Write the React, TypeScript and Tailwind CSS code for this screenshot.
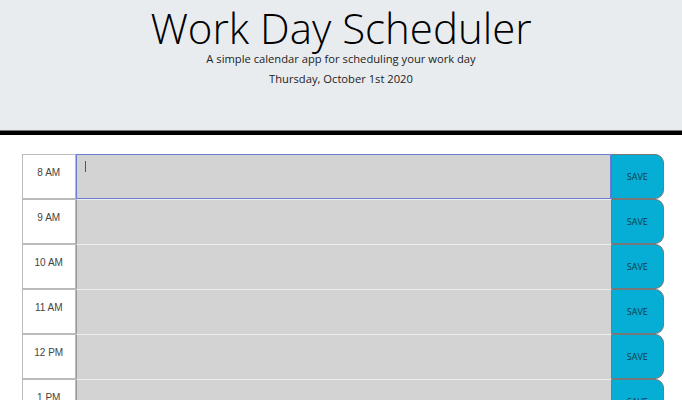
const HOURS = ['8 AM', '9 AM', '10 AM', '11 AM', '12 PM', '1 PM', '2 PM', '3 PM', '4 PM', '5 PM']

export default function App() {
  return (
    <div className="min-h-screen bg-white font-['Open_Sans',sans-serif]">
      <header className="h-[130px] bg-[#e9ecef] text-center text-black">
        <h1 className="pt-[4px] text-[42px] font-light leading-[47px]">Work Day Scheduler</h1>
        <p className="text-[11.2px] leading-[16px] text-[#222]">A simple calendar app for scheduling your work day</p>
        <p className="mt-[4px] text-[11.2px] leading-[16px] text-[#222]">Thursday, October 1st 2020</p>
      </header>
      <div className="h-[5px] border-t border-[#777] bg-black" />

      <div className="pl-[22px] pr-[18px] pt-[19px]">
        {HOURS.map((h, i) => (
          <div key={h} className="flex h-[45px]">
            <div className="w-[53.5px] shrink-0 border border-[#bbb] bg-white pt-[10px] text-center font-['Liberation_Sans',sans-serif] text-[10px] text-[#444]">
              {h}
            </div>
            <div
              className={
                i === 0
                  ? 'relative flex-1 border border-[#6b7bd8] bg-[#d3d3d3]'
                  : 'flex-1 border-t border-l border-t-[#eee] border-l-[#999] bg-[#d3d3d3]'
              }
            >
              {i === 0 && <span className="absolute left-[8px] top-[6px] h-[11px] w-px bg-[#555]" />}
            </div>
            <button className="flex w-[53.5px] shrink-0 items-center justify-center rounded-r-[9px] border border-[#777] bg-[#06aed5] text-[9px] text-[#123a48]">
              SAVE
            </button>
          </div>
        ))}
      </div>
    </div>
  )
}
